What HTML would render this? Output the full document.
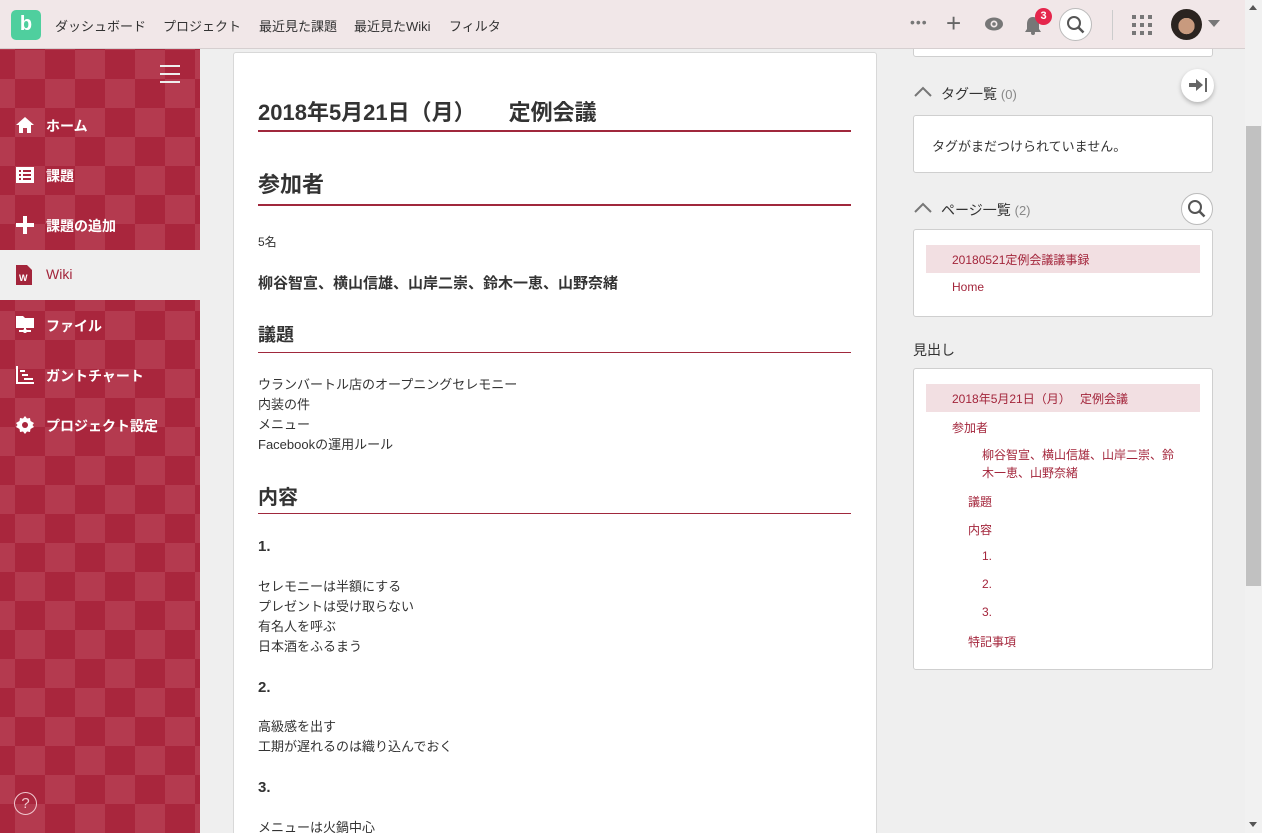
<!DOCTYPE html>
<html><head><meta charset="utf-8">
<style>
*{box-sizing:border-box;margin:0;padding:0}
html{width:1262px;height:833px;overflow:hidden}
body{width:1262px;height:833px;overflow:hidden;background:#efefef;font-family:"Liberation Sans","Noto Sans CJK JP",sans-serif;color:#333;position:relative}
.a{position:absolute;white-space:nowrap}
#hdr{position:absolute;left:0;top:0;width:1245px;height:49px;background:#f1e7e8;border-bottom:1px solid #d6cfd0;z-index:10}
#hdr .nav{font-size:13px;color:#333;top:16px}
#side{position:absolute;left:0;top:49px;width:200px;height:784px;background:conic-gradient(#a9263d 0 25%,#b43a4f 0 50%,#a9263d 0 75%,#b43a4f 0);background-size:60px 58px;background-position:15px 1px}
.mi{position:absolute;left:0;width:200px;height:50px;color:#fff;font-weight:bold;font-size:14px}
.mi span{position:absolute;left:46px;top:16px}
#card{position:absolute;left:233px;top:52px;width:644px;height:800px;background:#fff;border:1px solid #d8d8d8;border-radius:3px}
.t{position:absolute;left:258px;white-space:nowrap}
.ln{position:absolute;left:258px;width:593px;background:#a0283c}
.box{position:absolute;left:913px;width:300px;background:#fff;border:1px solid #cfcfcf;border-radius:3px}
.r{position:absolute;font-size:12px;color:#a3253b;white-space:nowrap}
.sb{position:absolute;left:1245px;top:0;width:17px;height:833px;background:#f1f1f1;z-index:11}
</style></head><body>
<div id="hdr">
 <div class="a" style="left:11px;top:10px;width:30px;height:30px;background:#4fcf9e;border-radius:5px;color:#fff;font-weight:bold;font-size:20px;text-align:center;line-height:28px">b</div>
 <div class="a nav" style="left:55px">ダッシュボード</div>
 <div class="a nav" style="left:163px">プロジェクト</div>
 <div class="a nav" style="left:259px">最近見た課題</div>
 <div class="a nav" style="left:354px">最近見たWiki</div>
 <div class="a nav" style="left:449px">フィルタ</div>
 <div class="a" style="left:910px;top:14px;font-size:14px;color:#777;letter-spacing:1px">•••</div>
 <div class="a" style="left:946px;top:8px;font-size:26px;color:#666;font-weight:300">+</div>
 <svg class="a" style="left:984px;top:16px" width="20" height="16" viewBox="0 0 20 16"><ellipse cx="10" cy="8" rx="9" ry="6.5" fill="#777"/><circle cx="10" cy="8" r="3.5" fill="#f1e7e8"/><circle cx="10" cy="8" r="1.8" fill="#777"/></svg>
 <svg class="a" style="left:1023px;top:14px" width="20" height="22" viewBox="0 0 20 22"><path d="M10 3c-4 0-6 3-6 7v5l-2 3h16l-2-3v-5c0-4-2-7-6-7z" fill="#777"/><circle cx="10" cy="19" r="2" fill="#777"/></svg>
 <div class="a" style="left:1035px;top:8px;width:17px;height:17px;border-radius:50%;background:#e5264c;color:#fff;font-size:11px;font-weight:bold;text-align:center;line-height:17px">3</div>
 <div class="a" style="left:1059px;top:8px;width:33px;height:33px;border-radius:50%;background:#fff;border:1px solid #bbb"></div>
 <svg class="a" style="left:1066px;top:15px" width="20" height="20" viewBox="0 0 20 20"><circle cx="8" cy="8" r="6" fill="none" stroke="#555" stroke-width="2"/><path d="M12.5 12.5l5 5" stroke="#555" stroke-width="2.5"/></svg>
 <div class="a" style="left:1112px;top:10px;width:1px;height:30px;background:#ccc"></div>
 <svg class="a" style="left:1132px;top:15px" width="20" height="20"><g fill="#777"><rect x="0" y="0" width="4" height="4"/><rect x="8" y="0" width="4" height="4"/><rect x="16" y="0" width="4" height="4"/><rect x="0" y="8" width="4" height="4"/><rect x="8" y="8" width="4" height="4"/><rect x="16" y="8" width="4" height="4"/><rect x="0" y="16" width="4" height="4"/><rect x="8" y="16" width="4" height="4"/><rect x="16" y="16" width="4" height="4"/></g></svg>
 <div class="a" style="left:1171px;top:9px;width:31px;height:31px;border-radius:50%;background:radial-gradient(circle at 50% 55%,#c89a7e 0 35%,#2b2420 36%)"></div>
 <div class="a" style="left:1208px;top:20px;width:0;height:0;border-left:6px solid transparent;border-right:6px solid transparent;border-top:7px solid #777"></div>
</div>
<div id="side">
 <div class="a" style="left:160px;top:16px;width:20px;height:2px;background:#eee;box-shadow:0 8px 0 #eee,0 16px 0 #eee"></div>
 <div class="mi" style="top:51px"><svg class="a" style="left:16px;top:17px" width="18" height="16"><path d="M9 0L0 8h3v8h4v-5h4v5h4V8h3z" fill="#fff"/></svg><span>ホーム</span></div>
 <div class="mi" style="top:101px"><svg class="a" style="left:16px;top:17px" width="18" height="16"><rect width="18" height="16" fill="#fff"/><g fill="#a9263d"><rect x="3" y="3" width="2" height="2"/><rect x="7" y="3" width="8" height="2"/><rect x="3" y="7" width="2" height="2"/><rect x="7" y="7" width="8" height="2"/><rect x="3" y="11" width="2" height="2"/><rect x="7" y="11" width="8" height="2"/></g></svg><span>課題</span></div>
 <div class="mi" style="top:151px"><svg class="a" style="left:16px;top:16px" width="18" height="18"><path d="M7 0h4v7h7v4h-7v7H7v-7H0V7h7z" fill="#fff"/></svg><span>課題の追加</span></div>
 <div class="mi" style="top:201px;background:#efefef;color:#a3253b;font-weight:normal"><svg class="a" style="left:16px;top:15px" width="16" height="20"><path d="M0 0h11l5 5v15H0z" fill="#a3253b"/><text x="3" y="16" font-size="9" fill="#fff" font-family="Liberation Sans" font-weight="bold">W</text></svg><span>Wiki</span></div>
 <div class="mi" style="top:251px"><svg class="a" style="left:16px;top:16px" width="18" height="18"><path d="M0 0h7l2 2h9v10H0z" fill="#fff"/><path d="M9 12v3M3 15h12" stroke="#fff" stroke-width="2"/><circle cx="9" cy="15" r="2" fill="#fff"/></svg><span>ファイル</span></div>
 <div class="mi" style="top:301px"><svg class="a" style="left:16px;top:16px" width="18" height="18"><path d="M1 0v17h17" stroke="#fff" stroke-width="2" fill="none"/><path d="M4 5h5M6 9h6M8 13h9" stroke="#fff" stroke-width="2"/></svg><span>ガントチャート</span></div>
 <div class="mi" style="top:351px"><svg class="a" style="left:16px;top:16px" width="18" height="18" viewBox="0 0 18 18"><path d="M9 0l2 2.5 3-.5.5 3L18 7l-1.5 2L18 11l-3.5 2-.5 3-3-.5L9 18l-2-2.5-3 .5-.5-3L0 11l1.5-2L0 7l3.5-2 .5-3 3 .5z" fill="#fff"/><circle cx="9" cy="9" r="3" fill="#a9263d"/></svg><span>プロジェクト設定</span></div>
 <div class="a" style="left:14px;top:743px;width:23px;height:23px;border-radius:50%;border:1px solid #f0c8cf;color:#f0c8cf;font-size:15px;text-align:center;line-height:21px">?</div>
</div>
<div id="card" style="height:790px"></div>
<div class="t" style="top:95px;font-size:22px;font-weight:bold">2018年5月21日（月）　　定例会議</div>
<div class="ln" style="top:130px;height:2px"></div>
<div class="t" style="top:167px;font-size:22px;font-weight:bold">参加者</div>
<div class="ln" style="top:204px;height:2px"></div>
<div class="t" style="top:233px;font-size:12px">5名</div>
<div class="t" style="top:272px;font-size:15px;font-weight:bold">柳谷智宣、横山信雄、山岸二崇、鈴木一恵、山野奈緒</div>
<div class="t" style="top:321px;font-size:18px;font-weight:bold">議題</div>
<div class="ln" style="top:352px;height:1px"></div>
<div class="t" style="top:375px;font-size:13px;line-height:20px">ウランバートル店のオープニングセレモニー<br>内装の件<br>メニュー<br>Facebookの運用ルール</div>
<div class="t" style="top:481px;font-size:20px;font-weight:bold">内容</div>
<div class="ln" style="top:513px;height:1px"></div>
<div class="t" style="top:538px;font-size:15px;font-weight:bold">1.</div>
<div class="t" style="top:577px;font-size:13px;line-height:20px">セレモニーは半額にする<br>プレゼントは受け取らない<br>有名人を呼ぶ<br>日本酒をふるまう</div>
<div class="t" style="top:679px;font-size:15px;font-weight:bold">2.</div>
<div class="t" style="top:717px;font-size:13px;line-height:20px">高級感を出す<br>工期が遅れるのは織り込んでおく</div>
<div class="t" style="top:779px;font-size:15px;font-weight:bold">3.</div>
<div class="t" style="top:818px;font-size:13px;line-height:20px">メニューは火鍋中心</div>

<div class="box" style="top:30px;height:27px"></div>
<svg class="a" style="left:914px;top:86px" width="18" height="12"><path d="M1 10l8-8 8 8" stroke="#777" stroke-width="2" fill="none"/></svg>
<div class="a" style="left:941px;top:84px;font-size:14px;color:#333">タグ一覧 <span style="color:#888;font-size:13px">(0)</span></div>
<div class="a" style="left:1181px;top:69px;width:33px;height:33px;border-radius:50%;background:#fff;box-shadow:0 2px 4px rgba(0,0,0,.25)"></div>
<svg class="a" style="left:1188px;top:77px" width="20" height="16"><path d="M1 6h7V2l7 6-7 6v-4H1z" fill="#666"/><rect x="17" y="1" width="2" height="14" fill="#666"/></svg>
<div class="box" style="top:115px;height:58px"></div>
<div class="a" style="left:932px;top:136px;font-size:13px;color:#333">タグがまだつけられていません。</div>
<svg class="a" style="left:914px;top:202px" width="18" height="12"><path d="M1 10l8-8 8 8" stroke="#777" stroke-width="2" fill="none"/></svg>
<div class="a" style="left:941px;top:200px;font-size:14px;color:#333">ページ一覧 <span style="color:#888;font-size:13px">(2)</span></div>
<div class="a" style="left:1181px;top:193px;width:32px;height:32px;border-radius:50%;background:#fff;border:1px solid #bbb"></div>
<svg class="a" style="left:1187px;top:199px" width="20" height="20"><circle cx="8" cy="8" r="6" fill="none" stroke="#555" stroke-width="2"/><path d="M12.5 12.5l5 5" stroke="#555" stroke-width="2.5"/></svg>
<div class="box" style="top:229px;height:88px"></div>
<div class="a" style="left:926px;top:245px;width:274px;height:28px;background:#f2dfe2"></div>
<div class="r" style="left:952px;top:251px">20180521定例会議議事録</div>
<div class="r" style="left:952px;top:280px">Home</div>
<div class="a" style="left:913px;top:340px;font-size:14px;color:#333">見出し</div>
<div class="box" style="top:368px;height:302px"></div>
<div class="a" style="left:926px;top:384px;width:274px;height:28px;background:#f2dfe2"></div>
<div class="r" style="left:952px;top:390px">2018年5月21日（月）　 定例会議</div>
<div class="r" style="left:952px;top:419px">参加者</div>
<div class="r" style="left:982px;top:446px;line-height:18px">柳谷智宣、横山信雄、山岸二崇、鈴<br>木一恵、山野奈緒</div>
<div class="r" style="left:968px;top:493px">議題</div>
<div class="r" style="left:968px;top:521px">内容</div>
<div class="r" style="left:982px;top:549px">1.</div>
<div class="r" style="left:982px;top:577px">2.</div>
<div class="r" style="left:982px;top:605px">3.</div>
<div class="r" style="left:968px;top:633px">特記事項</div>
<div class="sb"><div class="a" style="left:1px;top:126px;width:15px;height:460px;background:#c1c1c1"></div>
<div class="a" style="left:4px;top:5px;border-left:4px solid transparent;border-right:4px solid transparent;border-bottom:5px solid #555"></div>
<div class="a" style="left:4px;top:822px;border-left:4px solid transparent;border-right:4px solid transparent;border-top:5px solid #555"></div></div>
</body></html>
